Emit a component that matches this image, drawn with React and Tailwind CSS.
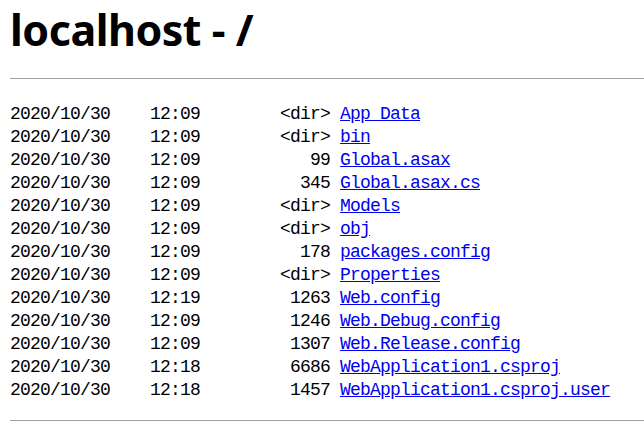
const rows = [
  ["2020/10/30", "12:09", "<dir>", "App_Data"],
  ["2020/10/30", "12:09", "<dir>", "bin"],
  ["2020/10/30", "12:09", "99", "Global.asax"],
  ["2020/10/30", "12:09", "345", "Global.asax.cs"],
  ["2020/10/30", "12:09", "<dir>", "Models"],
  ["2020/10/30", "12:09", "<dir>", "obj"],
  ["2020/10/30", "12:09", "178", "packages.config"],
  ["2020/10/30", "12:09", "<dir>", "Properties"],
  ["2020/10/30", "12:19", "1263", "Web.config"],
  ["2020/10/30", "12:09", "1246", "Web.Debug.config"],
  ["2020/10/30", "12:09", "1307", "Web.Release.config"],
  ["2020/10/30", "12:18", "6686", "WebApplication1.csproj"],
  ["2020/10/30", "12:18", "1457", "WebApplication1.csproj.user"],
];

const App = () => {
  return (
    <div className="min-h-screen bg-white pl-[10px] text-black overflow-hidden">
      <h1 className="text-[43px] leading-[59px] font-bold font-['Noto_Sans',sans-serif] tracking-[-0.5px]">
        localhost - /
      </h1>
      <hr className="mt-[19px] border-0 border-t border-[#a0a0a0]" />
      <div className="mt-[24px] font-['Liberation_Mono',monospace] text-[18px] tracking-[-0.8px] leading-[23px]">
        {rows.map(([date, time, size, name]) => (
          <div key={name} className="whitespace-pre">
            {date.padEnd(14, " ") + time + size.padStart(13, " ") + " "}
            <a href="#" className="text-[#0000ee] underline">
              {name}
            </a>
          </div>
        ))}
      </div>
      <hr className="mt-[18px] border-0 border-t border-[#a0a0a0]" />
    </div>
  );
};

export default App;
